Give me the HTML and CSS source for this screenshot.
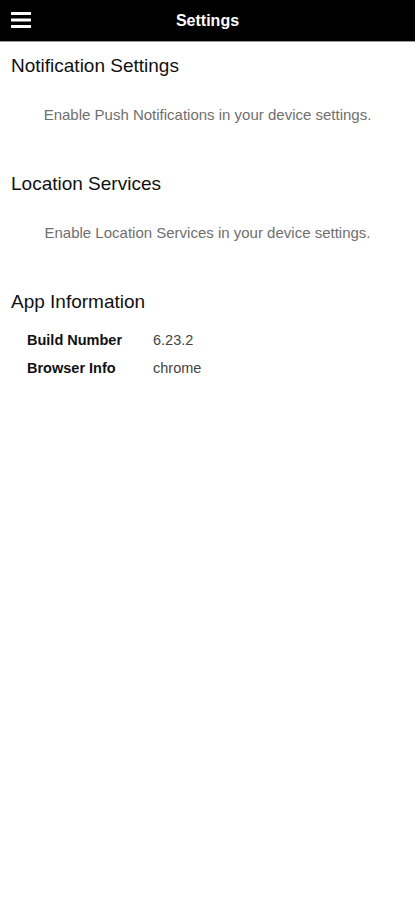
FILE: index.html
```html
<!DOCTYPE html>
<html lang="en">
<head>
    <meta charset="UTF-8">
    <meta name="viewport" content="width=device-width, initial-scale=1.0">
    <title>Settings</title>
    <link rel="stylesheet" href="styles.css">
</head>
<body>
    <header class="top-bar">
        <button class="menu-btn" aria-label="Menu">
            <svg width="20" height="17" viewBox="0 0 20 17">
                <rect x="0" y="0" width="20" height="3" fill="#fff"/>
                <rect x="0" y="6.5" width="20" height="3" fill="#fff"/>
                <rect x="0" y="13" width="20" height="3" fill="#fff"/>
            </svg>
        </button>
        <h1>Settings</h1>
    </header>
    <main>
        <section class="section">
            <h2>Notification Settings</h2>
            <p class="hint">Enable Push Notifications in your device settings.</p>
        </section>

        <section class="section">
            <h2>Location Services</h2>
            <p class="hint">Enable Location Services in your device settings.</p>
        </section>

        <section class="section">
            <h2>App Information</h2>
            <div class="info-row">
                <span class="info-label">Build Number</span>
                <span class="info-value">6.23.2</span>
            </div>
            <div class="info-row">
                <span class="info-label">Browser Info</span>
                <span class="info-value">chrome</span>
            </div>
        </section>
    </main>
</body>
</html>
```

FILE: styles.css
```css
body {
    font-family: "Liberation Sans", Arial, sans-serif;
    margin: 0;
    padding: 0;
    background-color: #fff;
    color: #111;
}

.top-bar {
    position: relative;
    height: 41px;
    background-color: #000;
    border-bottom: 1px solid #999;
    display: flex;
    align-items: center;
    justify-content: center;
}

.top-bar h1 {
    margin: 0;
    color: #fff;
    font-size: 16px;
    font-weight: bold;
}

.menu-btn {
    position: absolute;
    left: 11px;
    top: 12px;
    padding: 0;
    border: none;
    background: none;
    line-height: 0;
}

main {
    padding: 0 11px;
}

.section h2 {
    margin: 0;
    padding-top: 12px;
    font-size: 19px;
    font-weight: normal;
    line-height: 24px;
}

.hint {
    margin: 0;
    padding: 28px 0 36px;
    text-align: center;
    font-size: 15px;
    line-height: 18px;
    color: #6f6f6f;
}

.info-row {
    display: flex;
    padding-left: 16px;
    font-size: 14.5px;
    line-height: 28px;
}

.info-row:first-of-type {
    margin-top: 12px;
}

.info-label {
    width: 126px;
    font-weight: bold;
    color: #111;
}

.info-value {
    color: #444;
}
```
